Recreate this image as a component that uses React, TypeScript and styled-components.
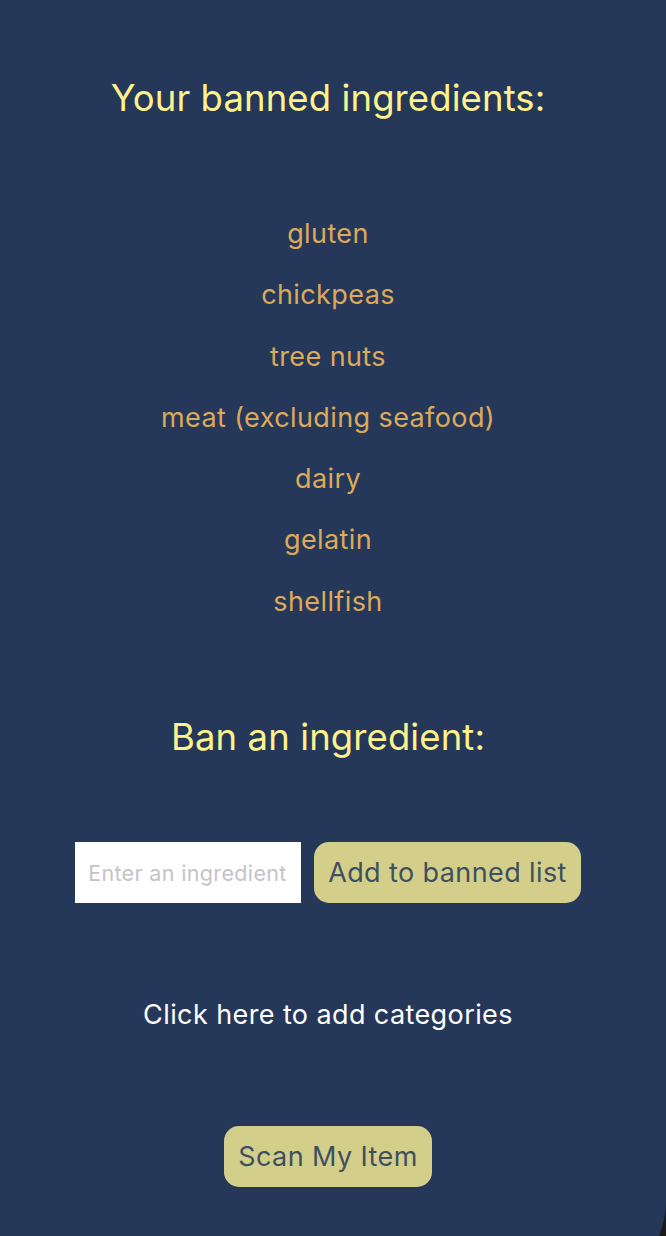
import React, { useState } from "react";
import styled, { createGlobalStyle } from "styled-components";

const Global = createGlobalStyle`
  html, body {
    margin: 0;
    padding: 0;
    background: #1b1b1d;
    overflow: hidden;
  }
  * { box-sizing: border-box; }
`;

const Screen = styled.div`
  background: #263859;
  min-height: 1296px;
  border-bottom-right-radius: 96px;
  display: flex;
  flex-direction: column;
  align-items: center;
  padding: 76px 10px 0 0;
  font-family: Inter, "Noto Sans", sans-serif;
`;

const Heading = styled.h1`
  margin: 0;
  font-weight: 400;
  font-size: 36.5px;
  line-height: 44px;
  color: #fdf28c;
  text-align: center;
  letter-spacing: 0.1px;
`;

const List = styled.ul`
  list-style: none;
  margin: 83px 0 83px;
  padding: 0;
  display: flex;
  flex-direction: column;
  align-items: center;
`;

const Item = styled.li`
  font-size: 27px;
  line-height: 61.3px;
  letter-spacing: 0.4px;
  color: #ddaa5b;
  text-align: center;
`;

const FormRow = styled.div`
  margin-top: 83px;
  display: flex;
  gap: 13px;
  align-items: stretch;
`;

const Input = styled.input`
  width: 226px;
  height: 61px;
  border: none;
  outline: none;
  background: #ffffff;
  padding: 0 13px;
  font-family: Inter, "Noto Sans", sans-serif;
  font-size: 21.5px;
  letter-spacing: 0.35px;
  color: #333;
  &::placeholder {
    color: #c4c4c8;
  }
`;

const PillButton = styled.button`
  height: 61px;
  padding: 0 14px;
  border: none;
  border-radius: 15px;
  background: #d3cf8a;
  color: #3e4f5f;
  font-family: Inter, "Noto Sans", sans-serif;
  font-size: 27px;
  letter-spacing: 0.4px;
  cursor: pointer;
`;

const LinkText = styled.div`
  margin-top: 96px;
  font-size: 27px;
  line-height: 32px;
  letter-spacing: 0.4px;
  color: #ffffff;
  cursor: pointer;
`;

const ScanWrap = styled.div`
  margin-top: 95px;
`;

const ingredients = [
  "gluten",
  "chickpeas",
  "tree nuts",
  "meat (excluding seafood)",
  "dairy",
  "gelatin",
  "shellfish",
];

export default function App() {
  const [value, setValue] = useState("");
  return (
    <>
      <Global />
      <Screen>
        <Heading>Your banned ingredients:</Heading>
        <List>
          {ingredients.map((i) => (
            <Item key={i}>{i}</Item>
          ))}
        </List>
        <Heading>Ban an ingredient:</Heading>
        <FormRow>
          <Input
            placeholder="Enter an ingredient"
            value={value}
            onChange={(e) => setValue(e.target.value)}
          />
          <PillButton>Add to banned list</PillButton>
        </FormRow>
        <LinkText>Click here to add categories</LinkText>
        <ScanWrap>
          <PillButton>Scan My Item</PillButton>
        </ScanWrap>
      </Screen>
    </>
  );
}
